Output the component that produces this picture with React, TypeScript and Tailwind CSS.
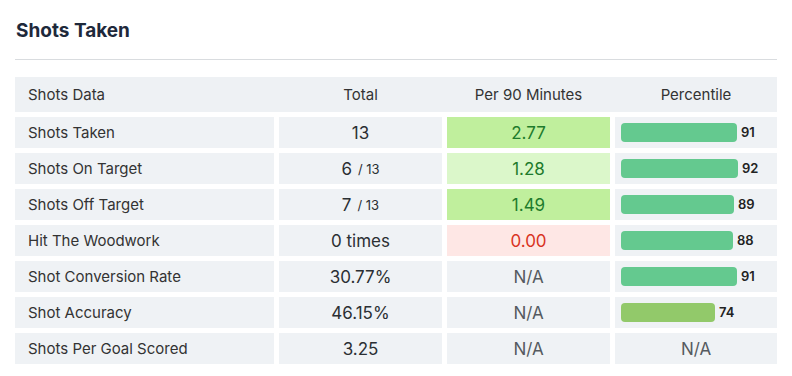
import React from "react";

type Row = {
	label: string;
	total: string;
	of?: string;
	per90: string;
	tone: "strong" | "light" | "bad" | "none";
	pct?: number;
};

const rows: Row[] = [
	{ label: "Shots Taken", total: "13", per90: "2.77", tone: "strong", pct: 91 },
	{ label: "Shots On Target", total: "6", of: "13", per90: "1.28", tone: "light", pct: 92 },
	{ label: "Shots Off Target", total: "7", of: "13", per90: "1.49", tone: "strong", pct: 89 },
	{ label: "Hit The Woodwork", total: "0 times", per90: "0.00", tone: "bad", pct: 88 },
	{ label: "Shot Conversion Rate", total: "30.77%", per90: "N/A", tone: "none", pct: 91 },
	{ label: "Shot Accuracy", total: "46.15%", per90: "N/A", tone: "none", pct: 74 },
	{ label: "Shots Per Goal Scored", total: "3.25", per90: "N/A", tone: "none" },
];

const toneClass = {
	strong: "bg-[#c0ef9d] text-[#1e7b2c]",
	light: "bg-[#dbf7ca] text-[#1e7b2c]",
	bad: "bg-[#fee7e5] text-[#d9331f]",
	none: "bg-[#eff2f5] text-[#555a60]",
};

function Percentile({ value }: { value?: number }) {
	if (value === undefined) {
		return <div className="flex h-full items-center justify-center bg-[#eff2f5] pt-[2px] text-[17px] text-[#555a60]">N/A</div>;
	}
	return (
		<div className="flex h-full items-center bg-[#eff2f5] pl-[6px]">
			<div
				className={`h-[19px] rounded-[4px] ${value >= 80 ? "bg-[#64c98f]" : "bg-[#92c96a]"}`}
				style={{ width: Math.round(value * 1.27) }}
			/>
			<span className="ml-[4px] text-[13px] font-semibold text-[#222]">{value}</span>
		</div>
	);
}

export default function App() {
	return (
		<div className="w-[792px] h-[376px] bg-white px-[15px] font-['Inter',sans-serif] text-[#2b2f33]">
			<div className="border-b border-[#d9dcdf] pb-[18px] pt-[21px] pl-[1px]">
				<h2 className="text-[19px] font-bold leading-[20px] text-[#1e293b]">Shots Taken</h2>
			</div>

			<div className="mt-[17px] flex flex-col gap-[5px]">
				<div className="grid h-[35px] grid-cols-[259px_163px_163px_162px] gap-x-[5px] items-center bg-[#eef1f4] pt-[2px] text-[15px] text-[#333]">
					<div className="pl-[13px]">Shots Data</div>
					<div className="text-center">Total</div>
					<div className="text-center">Per 90 Minutes</div>
					<div className="text-center">Percentile</div>
				</div>

				{rows.map((r) => (
					<div key={r.label} className="grid h-[31px] grid-cols-[259px_163px_163px_162px] gap-x-[5px]">
						<div className="flex items-center bg-[#eff2f5] pl-[13px] pt-[2px] text-[15px] text-[#333]">{r.label}</div>
						<div className="flex items-center justify-center bg-[#eff2f5] pt-[2px] text-[17px] text-[#2b2f33]">
							{r.total}
							{r.of && <span className="ml-[6px] text-[13px]">/ {r.of}</span>}
						</div>
						<div className={`flex items-center justify-center pt-[2px] text-[17px] ${toneClass[r.tone]}`}>{r.per90}</div>
						<Percentile value={r.pct} />
					</div>
				))}
			</div>
		</div>
	);
}
